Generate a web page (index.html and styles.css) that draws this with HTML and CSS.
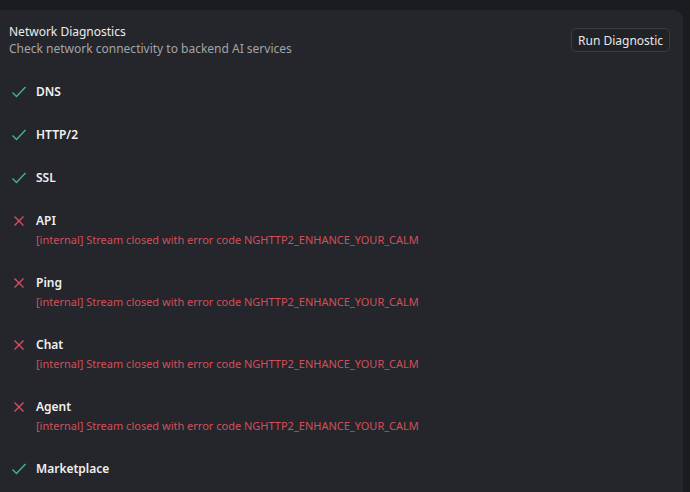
FILE: index.html
```html
<!DOCTYPE html>
<html lang="en">
<head>
<meta charset="UTF-8">
<meta name="viewport" content="width=device-width, initial-scale=1.0">
<title>Network Diagnostics</title>
<link rel="stylesheet" href="styles.css">
</head>
<body>
<div class="panel">
    <div class="panel-header">
        <div>
            <h2 class="title">Network Diagnostics</h2>
            <p class="subtitle">Check network connectivity to backend AI services</p>
        </div>
        <button class="run-btn">Run Diagnostic</button>
    </div>
    <ul class="checks">
        <li class="check ok">
            <span class="icon"><svg width="16" height="16" viewBox="0 0 16 16"><path d="M1.5 8.5 L5.5 12.5 L14.5 3" /></svg></span>
            <div class="label">DNS</div>
        </li>
        <li class="check ok">
            <span class="icon"><svg width="16" height="16" viewBox="0 0 16 16"><path d="M1.5 8.5 L5.5 12.5 L14.5 3" /></svg></span>
            <div class="label">HTTP/2</div>
        </li>
        <li class="check ok">
            <span class="icon"><svg width="16" height="16" viewBox="0 0 16 16"><path d="M1.5 8.5 L5.5 12.5 L14.5 3" /></svg></span>
            <div class="label">SSL</div>
        </li>
        <li class="check fail">
            <span class="icon"><svg width="16" height="16" viewBox="0 0 16 16"><path d="M3.5 3.5 L12.5 12.5 M12.5 3.5 L3.5 12.5" /></svg></span>
            <div>
                <div class="label">API</div>
                <div class="error">[internal] Stream closed with error code NGHTTP2_ENHANCE_YOUR_CALM</div>
            </div>
        </li>
        <li class="check fail">
            <span class="icon"><svg width="16" height="16" viewBox="0 0 16 16"><path d="M3.5 3.5 L12.5 12.5 M12.5 3.5 L3.5 12.5" /></svg></span>
            <div>
                <div class="label">Ping</div>
                <div class="error">[internal] Stream closed with error code NGHTTP2_ENHANCE_YOUR_CALM</div>
            </div>
        </li>
        <li class="check fail">
            <span class="icon"><svg width="16" height="16" viewBox="0 0 16 16"><path d="M3.5 3.5 L12.5 12.5 M12.5 3.5 L3.5 12.5" /></svg></span>
            <div>
                <div class="label">Chat</div>
                <div class="error">[internal] Stream closed with error code NGHTTP2_ENHANCE_YOUR_CALM</div>
            </div>
        </li>
        <li class="check fail">
            <span class="icon"><svg width="16" height="16" viewBox="0 0 16 16"><path d="M3.5 3.5 L12.5 12.5 M12.5 3.5 L3.5 12.5" /></svg></span>
            <div>
                <div class="label">Agent</div>
                <div class="error">[internal] Stream closed with error code NGHTTP2_ENHANCE_YOUR_CALM</div>
            </div>
        </li>
        <li class="check ok">
            <span class="icon"><svg width="16" height="16" viewBox="0 0 16 16"><path d="M1.5 8.5 L5.5 12.5 L14.5 3" /></svg></span>
            <div class="label">Marketplace</div>
        </li>
    </ul>
</div>
</body>
</html>
```

FILE: styles.css
```css
body {
    margin: 0;
    background-color: #1b1c20;
    font-family: "Noto Sans", "Open Sans", sans-serif;
    font-size: 12px;
    color: #e6e6e6;
    overflow: hidden;
}
.panel {
    margin-top: 10px;
    width: 683px;
    height: calc(100vh - 10px);
    background-color: #25262b;
    border-radius: 0 9px 0 0;
    padding: 13px 13px 0 9px;
    box-sizing: border-box;
}
.panel-header {
    display: flex;
    justify-content: space-between;
    align-items: flex-start;
}
.title {
    margin: 0;
    font-size: 12px;
    font-weight: 400;
    line-height: 17px;
    color: #ececec;
}
.subtitle {
    margin: 0;
    font-size: 12px;
    line-height: 17px;
    color: #a3a4a9;
}
.run-btn {
    margin-top: 5px;
    height: 24px;
    padding: 0 6px;
    background-color: #212226;
    color: #e8e8e8;
    border: 1px solid #3b3c41;
    border-radius: 5px;
    font-family: inherit;
    font-size: 12px;
    cursor: pointer;
}
.checks {
    list-style: none;
    margin: 13px 0 0 0;
    padding: 0;
}
.check {
    display: grid;
    grid-template-columns: 20px 1fr;
    column-gap: 7px;
    padding: 12px 0;
    line-height: 19px;
}
.icon {
    display: flex;
    align-items: center;
    justify-content: center;
    height: 19px;
}
.icon svg {
    fill: none;
    stroke-width: 1.4;
}
.ok .icon svg {
    stroke: #3fb883;
}
.fail .icon svg {
    stroke: #d4505b;
}
.label {
    font-weight: 600;
    font-size: 12px;
    color: #f0f0f0;
}
.error {
    font-size: 11px;
    color: #d24f5a;
}
```
